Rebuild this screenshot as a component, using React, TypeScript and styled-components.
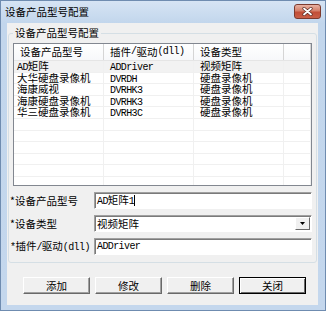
import styled, { createGlobalStyle } from "styled-components";

const GlobalStyle = createGlobalStyle`
  html, body {
    margin: 0;
    padding: 0;
    background: #ffffff;
  }
  body {
    font-family: "Noto Sans CJK SC", "Liberation Sans", sans-serif;
    font-size: 10.5px;
    line-height: 12px;
    color: #000;
  }
`;

const Window = styled.div`
  width: 326px;
  height: 311px;
  box-sizing: border-box;
  border: 1px solid #6f8cb0;
  background: linear-gradient(#d6e4f4, #c2d6ec 22px, #c4d7ed);
  display: flex;
  flex-direction: column;
`;

const TitleBar = styled.div`
  height: 22px;
  display: flex;
  align-items: center;
  justify-content: space-between;
  padding: 0 4px 0 4px;
`;

const Title = styled.div`
  font-size: 10.5px;
  color: #000;
`;

const CloseButton = styled.div`
  width: 27px;
  height: 15px;
  box-sizing: border-box;
  margin-top: -2px;
  border: 1px solid #7c3a2e;
  border-radius: 3px;
  background: linear-gradient(#e8b1a2, #d47f69 45%, #c24e37 55%, #c95f47);
  display: flex;
  align-items: center;
  justify-content: center;
`;

const Client = styled.div`
  flex: 1;
  margin: 0 7px 5px 6px;
  background: #f0f0f0;
  padding: 4px 1px 0;
  display: flex;
  flex-direction: column;
`;

const GroupBox = styled.fieldset`
  margin: 0;
  border: 1px solid #d5dfe5;
  border-radius: 3px;
  padding: 4px 4px 7px 4px;
`;

const Legend = styled.legend`
  padding: 0 2px;
  line-height: 12px;
`;

const List = styled.div`
  height: 143px;
  box-sizing: border-box;
  border: 1px solid #828790;
  background: #fff;
  overflow: hidden;
`;

const cols = "90px 90px 90px 1fr";

const Header = styled.div`
  display: grid;
  grid-template-columns: ${cols};
  height: 17px;
  box-sizing: border-box;
  border-bottom: 1px solid #e5e5e5;
  background: linear-gradient(#ffffff, #f7f8fa);
`;

const HeadCell = styled.div`
  border-right: 1px solid #d5d5d5;
  padding-left: 6px;
  display: flex;
  align-items: center;
  white-space: nowrap;
`;

const Row = styled.div<{ $selected?: boolean }>`
  display: grid;
  grid-template-columns: ${cols};
  height: 11.6px;
  box-sizing: border-box;
  border-bottom: 1px solid #f0f0f0;
  background: ${(p) => (p.$selected ? "#f2f2f2" : "transparent")};
`;

const Cell = styled.div<{ $first?: boolean }>`
  border-right: 1px solid #f0f0f0;
  padding-left: ${(p) => (p.$first ? "3px" : "6px")};
  font-size: 10.5px;
  line-height: 10.6px;
  white-space: nowrap;
`;

const FormRow = styled.div`
  display: grid;
  grid-template-columns: 81px 1fr;
  align-items: center;
  height: 17px;
  margin-top: 6px;
  &:first-of-type {
    margin-top: 5px;
  }
`;

const Label = styled.div`
  margin-left: -3px;
  white-space: nowrap;
`;

const Field = styled.div`
  height: 17px;
  box-sizing: border-box;
  border: 1px solid;
  border-color: #a0a0a0 #ffffff #ffffff #a0a0a0;
  box-shadow: inset 1px 1px 0 #7a7a7a;
  background: #fff;
  padding-left: 2px;
  display: flex;
  align-items: center;
  justify-content: space-between;
`;

const Caret = styled.span`
  display: inline-block;
  width: 1px;
  height: 11px;
  background: #000;
  vertical-align: middle;
`;

const DropButton = styled.div`
  width: 15px;
  height: 13px;
  box-sizing: border-box;
  border: 1px solid;
  border-color: #ffffff #696969 #696969 #ffffff;
  background: #f0f0f0;
  margin-right: 1px;
  display: flex;
  align-items: center;
  justify-content: center;
`;

const ButtonRow = styled.div`
  display: flex;
  gap: 5px;
  padding-left: 15px;
  margin-top: 14px;
`;

const Button = styled.div<{ $default?: boolean }>`
  width: 67px;
  height: 17px;
  box-sizing: border-box;
  border: 1px solid;
  border-color: ${(p) => (p.$default ? "#000 #000 #000 #000" : "#ffffff #696969 #696969 #ffffff")};
  box-shadow: ${(p) =>
    p.$default
      ? "inset 1px 1px 0 #ffffff, inset -1px -1px 0 #696969"
      : "inset -1px -1px 0 #a0a0a0"};
  background: #f0f0f0;
  display: flex;
  align-items: center;
  justify-content: center;
`;

const Ascii = styled.span`
  font-family: "Liberation Mono", monospace;
  font-size: 10px;
  letter-spacing: -0.6px;
`;

function Txt({ children }: { children: string }) {
  const parts = children.split(/([\x20-\x7e]+)/).filter(Boolean);
  return (
    <>
      {parts.map((p, i) => (/^[\x20-\x7e]+$/.test(p) ? <Ascii key={i}>{p}</Ascii> : p))}
    </>
  );
}

const devices = [
  ["AD矩阵", "ADDriver", "视频矩阵"],
  ["大华硬盘录像机", "DVRDH", "硬盘录像机"],
  ["海康威视", "DVRHK3", "硬盘录像机"],
  ["海康硬盘录像机", "DVRHK3", "硬盘录像机"],
  ["华三硬盘录像机", "DVRH3C", "硬盘录像机"],
];

const emptyRows = 7;

function App() {
  return (
    <>
      <GlobalStyle />
      <Window>
        <TitleBar>
          <Title>设备产品型号配置</Title>
          <CloseButton>
            <svg width="11" height="9" viewBox="0 0 11 9">
              <path d="M2 1.5 L9 7.5 M9 1.5 L2 7.5" stroke="#5a2a22" strokeWidth="3.2" strokeLinecap="round" />
              <path d="M2 1.5 L9 7.5 M9 1.5 L2 7.5" stroke="#ffffff" strokeWidth="1.8" strokeLinecap="round" />
            </svg>
          </CloseButton>
        </TitleBar>
        <Client>
          <GroupBox>
            <Legend>设备产品型号配置</Legend>
            <List>
              <Header>
                <HeadCell>设备产品型号</HeadCell>
                <HeadCell>
                  <Txt>插件/驱动(dll)</Txt>
                </HeadCell>
                <HeadCell>设备类型</HeadCell>
                <HeadCell />
              </Header>
              {devices.map((d, i) => (
                <Row key={i} $selected={i === 0}>
                  <Cell $first>
                    <Txt>{d[0]}</Txt>
                  </Cell>
                  <Cell>
                    <Txt>{d[1]}</Txt>
                  </Cell>
                  <Cell>{d[2]}</Cell>
                  <Cell />
                </Row>
              ))}
              {Array.from({ length: emptyRows }).map((_, i) => (
                <Row key={"e" + i}>
                  <Cell $first />
                  <Cell />
                  <Cell />
                  <Cell />
                </Row>
              ))}
            </List>
            <FormRow>
              <Label>*设备产品型号</Label>
              <Field>
                <span>
                  <Txt>AD矩阵1</Txt>
                  <Caret />
                </span>
              </Field>
            </FormRow>
            <FormRow>
              <Label>*设备类型</Label>
              <Field>
                <span>视频矩阵</span>
                <DropButton>
                  <svg width="5" height="3" viewBox="0 0 5 3">
                    <path d="M0 0 H5 L2.5 3 Z" fill="#000" />
                  </svg>
                </DropButton>
              </Field>
            </FormRow>
            <FormRow>
              <Label>
                <Txt>*插件/驱动(dll)</Txt>
              </Label>
              <Field>
                <Txt>ADDriver</Txt>
              </Field>
            </FormRow>
          </GroupBox>
          <ButtonRow>
            <Button>添加</Button>
            <Button>修改</Button>
            <Button>删除</Button>
            <Button $default>关闭</Button>
          </ButtonRow>
        </Client>
      </Window>
    </>
  );
}

export default App;
